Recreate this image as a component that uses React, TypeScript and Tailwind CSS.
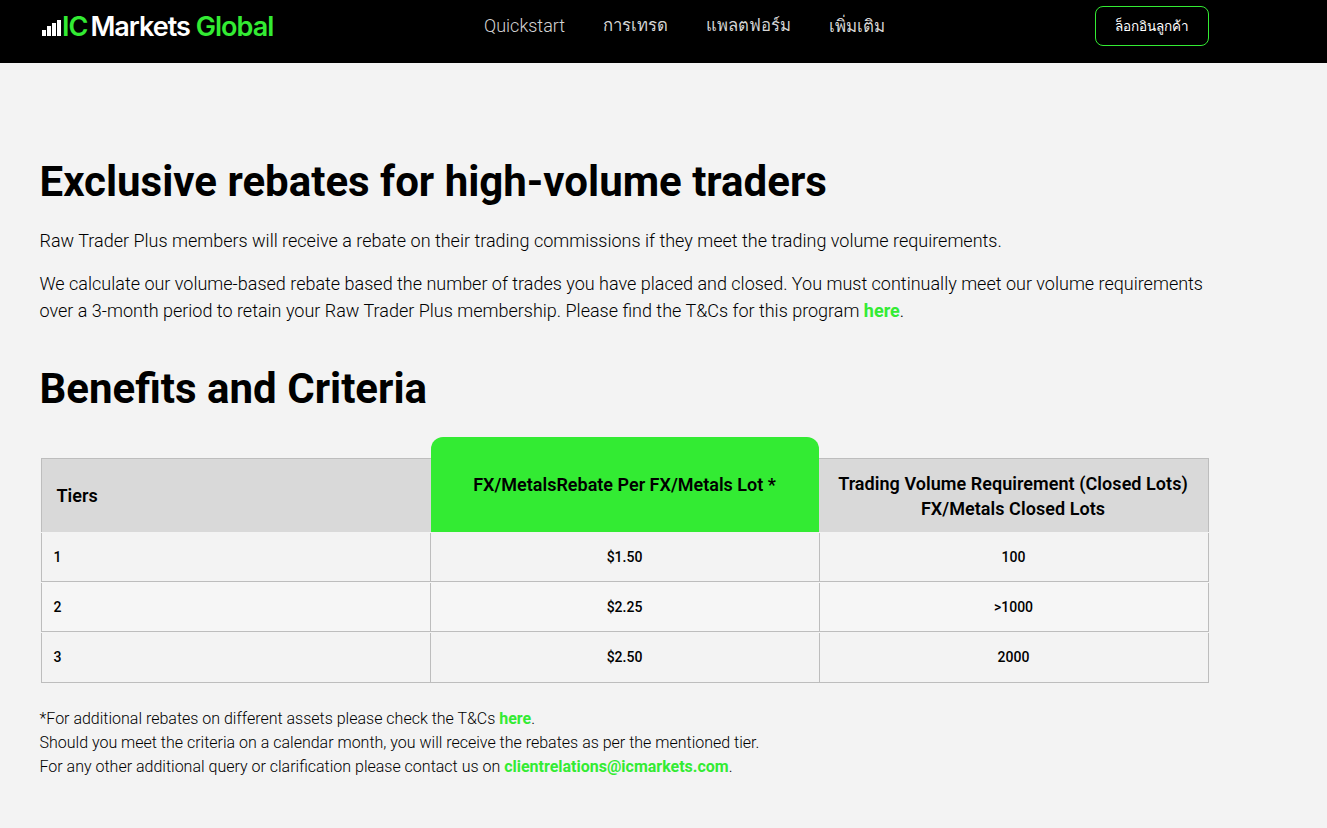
const navItems = [
  { label: "Quickstart", size: "text-[18px]" },
  { label: "การเทรด", size: "text-[16.7px]" },
  { label: "แพลตฟอร์ม", size: "text-[16.7px]" },
  { label: "เพิ่มเติม", size: "text-[16.9px]" },
];

const rows = [
  { tier: "1", rebate: "$1.50", volume: "100", bg: "bg-[#f3f3f3]", h: "h-[50px]" },
  { tier: "2", rebate: "$2.25", volume: ">1000", bg: "bg-[#f6f6f6]", h: "h-[50px]" },
  { tier: "3", rebate: "$2.50", volume: "2000", bg: "bg-[#f3f3f3]", h: "h-[51px]" },
];

function Logo() {
  return (
    <div className="flex items-center h-[26px]">
      <svg width="19" height="16" viewBox="0 0 19 16" className="mr-px mt-[3px]" fill="#fff">
        <rect x="0" y="10" width="4" height="6" />
        <rect x="5" y="6" width="4" height="10" />
        <rect x="10" y="3" width="4" height="13" />
        <rect x="15" y="0" width="4" height="16" />
      </svg>
      <span className="font-['Inter',sans-serif] text-[27px] font-semibold tracking-[-1px] text-[#33eb33] leading-none">IC</span>
      <span className="ml-[3px] font-['Inter',sans-serif] text-[27px] font-semibold tracking-[-1px] text-white leading-none">Markets</span>
      <span className="ml-[6px] font-['Inter',sans-serif] text-[27px] font-semibold tracking-[-1px] text-[#33eb33] leading-none">Global</span>
    </div>
  );
}

function Header() {
  return (
    <header className="h-[63px] bg-black flex items-start">
      <div className="w-[236px] ml-[42px] mt-[13px]">
        <Logo />
      </div>
      <nav className="ml-[206px] mt-[13px] flex items-center gap-[38px] leading-[26px] text-[#d4d4d4] font-light">
        {navItems.map((item) => (
          <a key={item.label} className={item.size}>{item.label}</a>
        ))}
      </nav>
      <a className="ml-auto mr-[118px] mt-[6px] w-[114px] h-[40px] flex items-center justify-center rounded-[8px] border border-[#33eb33] text-white text-[13.5px] font-medium">
        ล็อกอินลูกค้า
      </a>
    </header>
  );
}

function Table() {
  return (
    <div className="mt-[22px] w-[1168px] ml-px">
      <div className="grid grid-cols-[390px_388px_390px] items-end">
        <div className="h-[74px] bg-[#d9d9d9] border-t border-l border-[#bdbdbd] flex items-center pl-[15px] text-[18px] font-semibold text-black">
          Tiers
        </div>
        <div className="h-[95px] bg-[#33eb33] rounded-t-[12px] flex items-center justify-center text-[18px] font-semibold text-black">
          FX/MetalsRebate Per FX/Metals Lot *
        </div>
        <div className="h-[74px] bg-[#d9d9d9] border-t border-r border-[#bdbdbd] flex items-center justify-center text-center text-[18px] leading-[25px] font-semibold tracking-[0.05px] text-black">
          <p>
            Trading Volume Requirement (Closed Lots)
            <br />
            FX/Metals Closed Lots
          </p>
        </div>
      </div>
      {rows.map((row) => (
        <div key={row.tier} className={`grid grid-cols-[389px_389px_390px] pt-px text-[14px] font-medium text-black border-b border-[#bdbdbd] ${row.h} ${row.bg}`}>
          <div className="flex items-center pl-[12px] border-l border-[#bdbdbd]">{row.tier}</div>
          <div className="flex items-center justify-center border-l border-[#bdbdbd]">{row.rebate}</div>
          <div className="flex items-center justify-center border-x border-[#bdbdbd]">{row.volume}</div>
        </div>
      ))}
    </div>
  );
}

export default function App() {
  return (
    <div className="h-[828px] overflow-hidden bg-[#f3f3f3] font-['Roboto','Noto_Sans',sans-serif] text-black">
      <Header />
      <main className="pl-[39.5px] w-[1210px]">
        <h1 className="mt-[93px] text-[42px] leading-[52px] font-bold">Exclusive rebates for high-volume traders</h1>
        <p className="mt-[19px] text-[18px] leading-[27px] font-light">
          Raw Trader Plus members will receive a rebate on their trading commissions if they meet the trading volume requirements.
        </p>
        <p className="mt-[16px] text-[18px] leading-[27px] font-light">
          We calculate our volume-based rebate based the number of trades you have placed and closed. You must continually meet our volume requirements over a 3-month period to retain your Raw Trader Plus membership. Please find the T&amp;Cs for this program{" "}
          <a className="font-bold text-[#33eb33]">here</a>.
        </p>
        <h2 className="mt-[39px] text-[42px] leading-[52px] font-bold">Benefits and Criteria</h2>
        <Table />
        <div className="mt-[24px] text-[16px] leading-[24px] font-light">
          <p>
            *For additional rebates on different assets please check the T&amp;Cs <a className="font-bold text-[#33eb33]">here</a>.
          </p>
          <p>Should you meet the criteria on a calendar month, you will receive the rebates as per the mentioned tier.</p>
          <p>
            For any other additional query or clarification please contact us on{" "}
            <a className="font-bold text-[#33eb33]">clientrelations@icmarkets.com</a>.
          </p>
        </div>
      </main>
    </div>
  );
}
